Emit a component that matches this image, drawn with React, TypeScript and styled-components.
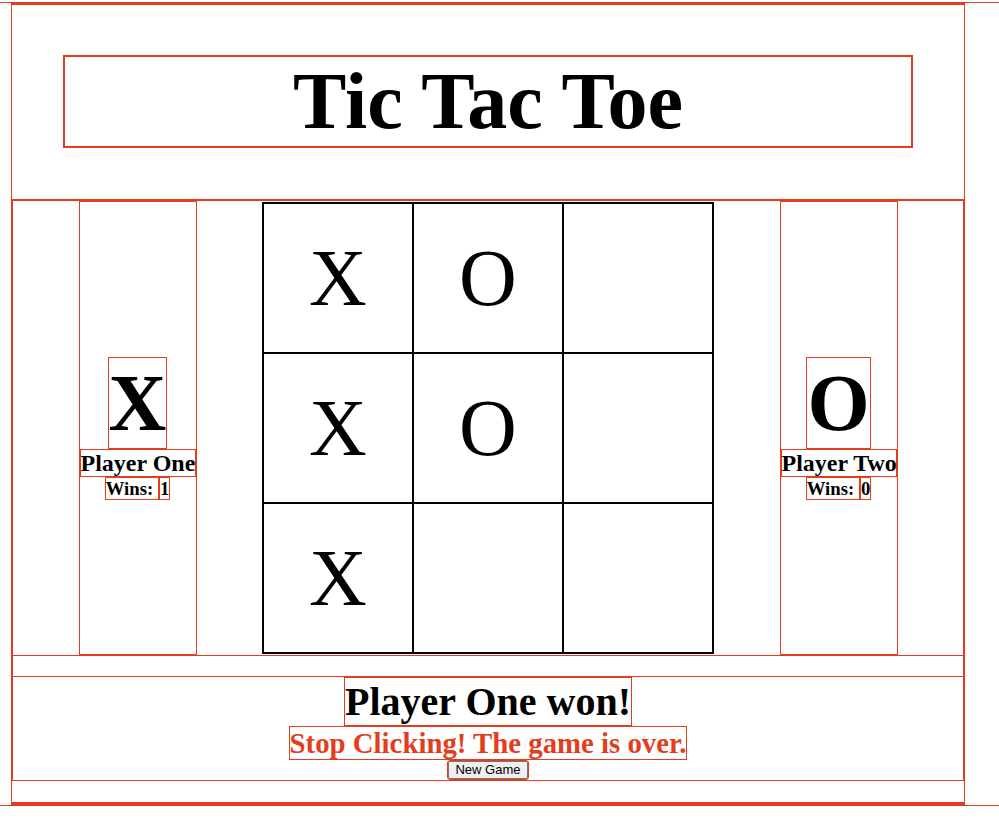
import styled, { createGlobalStyle } from "styled-components";

const red = "#e33d1d";
const serif = `"Liberation Serif", "Times New Roman", serif`;

const GlobalStyle = createGlobalStyle`
  * {
    box-sizing: border-box;
  }
  body {
    margin: 0;
    background: #ffffff;
    font-family: ${serif};
    color: #000000;
  }
`;

const Frame = styled.div`
  margin-top: 2px;
  border-top: 1px solid ${red};
  border-bottom: 1px solid ${red};
`;

const Container = styled.div`
  margin-left: 11px;
  width: 954px;
  border: 1px solid ${red};
  border-top-width: 2px;
  border-bottom-width: 3px;
`;

const Header = styled.header`
  padding: 50px 51px 51px;
`;

const TitleBox = styled.div`
  border: 2px solid ${red};
  text-align: center;
`;

const Title = styled.h1`
  margin: 0;
  font-size: 80px;
  line-height: 89px;
  font-weight: bold;
`;

const Main = styled.main`
  border-top: 2px solid ${red};
  border-left: 1px solid ${red};
  border-right: 1px solid ${red};
`;

const GameSection = styled.section`
  display: flex;
  justify-content: space-evenly;
  align-items: stretch;
  height: 455px;
  border-bottom: 1px solid ${red};
`;

const PlayerPanel = styled.div`
  width: 118px;
  border: 1px solid ${red};
  display: flex;
  flex-direction: column;
  justify-content: center;
  align-items: center;
`;

const Symbol = styled.div`
  border: 1px solid ${red};
  font-size: 80px;
  font-weight: bold;
  line-height: 90px;
`;

const PlayerName = styled.h2`
  margin: 0;
  align-self: stretch;
  border: 1px solid ${red};
  font-size: 24px;
  line-height: 26px;
  font-weight: bold;
  text-align: center;
  white-space: nowrap;
`;

const WinsRow = styled.div`
  display: flex;
  font-size: 18.72px;
  line-height: 21px;
  font-weight: bold;
`;

const WinsPart = styled.span`
  border: 1px solid ${red};
  white-space: pre;
`;

const Board = styled.div`
  align-self: center;
  display: grid;
  grid-template-columns: repeat(3, 150px);
  grid-template-rows: repeat(3, 150px);
  border: 1px solid #000000;
`;

const Cell = styled.div`
  border: 1px solid #000000;
  display: flex;
  align-items: center;
  justify-content: center;
  font-size: 80px;
  line-height: 1;
`;

const Status = styled.section`
  margin: 20px 0 21px;
  border-top: 1px solid ${red};
  border-bottom: 1px solid ${red};
  padding-bottom: 1px;
  display: flex;
  flex-direction: column;
  align-items: center;
`;

const Winner = styled.h2`
  margin: 0;
  border: 1px solid ${red};
  font-size: 40px;
  line-height: 47px;
  font-weight: bold;
`;

const Warning = styled.p`
  margin: 0;
  border: 1px solid ${red};
  color: ${red};
  font-size: 28.8px;
  line-height: 32px;
  font-weight: bold;
`;

const NewGameButton = styled.button`
  margin-top: 1px;
  font-family: "Liberation Sans", Arial, sans-serif;
  font-size: 13px;
  line-height: 14px;
  padding: 1px 6px;
  background: #efefef;
  color: #000000;
  border: 1px solid #767676;
  border-radius: 2px;
  outline: 1px solid ${red};
`;

const board = ["X", "O", "", "X", "O", "", "X", "", ""];

const players = [
  { symbol: "X", name: "Player One", wins: 1 },
  { symbol: "O", name: "Player Two", wins: 0 },
];

function Player({ symbol, name, wins }: { symbol: string; name: string; wins: number }) {
  return (
    <PlayerPanel>
      <Symbol>{symbol}</Symbol>
      <PlayerName>{name}</PlayerName>
      <WinsRow>
        <WinsPart>Wins: </WinsPart>
        <WinsPart>{wins}</WinsPart>
      </WinsRow>
    </PlayerPanel>
  );
}

export default function App() {
  return (
    <>
      <GlobalStyle />
      <Frame>
        <Container>
          <Header>
            <TitleBox>
              <Title>Tic Tac Toe</Title>
            </TitleBox>
          </Header>
          <Main>
            <GameSection>
              <Player {...players[0]} />
              <Board>
                {board.map((mark, i) => (
                  <Cell key={i}>{mark}</Cell>
                ))}
              </Board>
              <Player {...players[1]} />
            </GameSection>
            <Status>
              <Winner>Player One won!</Winner>
              <Warning>Stop Clicking! The game is over.</Warning>
              <NewGameButton>New Game</NewGameButton>
            </Status>
          </Main>
        </Container>
      </Frame>
    </>
  );
}
